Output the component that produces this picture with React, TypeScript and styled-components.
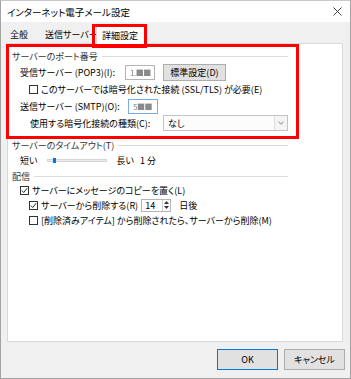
import React from 'react';
import styled, { createGlobalStyle } from 'styled-components';

const Global = createGlobalStyle`
  html, body { margin: 0; padding: 0; background: #fff; }
  body {
    font-family: "Noto Sans CJK JP", "Noto Sans", sans-serif;
    font-size: 9px;
    color: #000;
    font-feature-settings: "palt";
  }
  * { box-sizing: border-box; }
`;

const Window = styled.div`
  position: relative;
  width: 351px;
  height: 379px;
  background: #f0f0f0;
  border: 1px solid #a3a3a3;
  border-top-color: #c8c8c8;
  display: flex;
  flex-direction: column;
`;

const TitleBar = styled.div`
  height: 21px;
  background: #fff;
  display: flex;
  align-items: center;
  justify-content: space-between;
  padding: 0 8px 0 6px;
  font-size: 9.5px;
`;

const Close = styled.svg`
  width: 9px;
  height: 9px;
`;

const TabRow = styled.div`
  height: 21px;
  display: flex;
  align-items: flex-end;
  padding-left: 6px;
`;

const Tab = styled.div<{ $w: number; $pl: number; $active?: boolean }>`
  width: ${p => p.$w}px;
  height: ${p => (p.$active ? 19 : 17)}px;
  padding-left: ${p => p.$pl}px;
  display: flex;
  align-items: center;
  white-space: nowrap;
  overflow: hidden;
  position: relative;
  background: ${p => (p.$active ? '#fff' : '#f0f0f0')};
  margin-left: ${p => (p.$active ? -2 : 0)}px;
  margin-bottom: ${p => (p.$active ? -1 : 0)}px;
  z-index: ${p => (p.$active ? 2 : 1)};
  border: ${p => (p.$active ? '1px solid #d9d9d9' : 'none')};
  border-bottom: none;
`;

const Panel = styled.div`
  margin-left: 6px;
  width: 336px;
  height: 299px;
  background: #fff;
  border: 1px solid #d9d9d9;
  padding: 5px 54px 0 4px;
  display: flex;
  flex-direction: column;
`;

const GroupHead = styled.div<{ $mt?: number }>`
  height: 14px;
  margin-top: ${p => p.$mt ?? 0}px;
  display: flex;
  align-items: center;
  color: #333;
`;

const HeadLine = styled.div`
  flex: 1;
  height: 1px;
  background: #dcdcdc;
  margin-left: 4px;
`;

const Row = styled.div<{ $h: number; $indent: number; $mt?: number }>`
  height: ${p => p.$h}px;
  margin-top: ${p => p.$mt ?? 0}px;
  padding-left: ${p => p.$indent}px;
  display: flex;
  align-items: center;
  white-space: nowrap;
`;

const Label = styled.span<{ $w?: number }>`
  display: inline-block;
  ${p => (p.$w ? `width: ${p.$w}px;` : '')}
`;

const TextBox = styled.div<{ $focus?: boolean; $w: number; $h: number }>`
  width: ${p => p.$w}px;
  height: ${p => p.$h}px;
  border: 1px solid ${p => (p.$focus ? '#7aaee0' : '#b4b4b4')};
  background: #fff;
  display: flex;
  align-items: center;
  padding-left: 4px;
  overflow: hidden;
`;

const Blur = styled.span`
  color: #8a8a8a;
  filter: blur(0.7px);
  font-size: 8px;
  letter-spacing: -0.5px;
`;

const PushButton = styled.div<{ $w: number; $h: number; $default?: boolean }>`
  width: ${p => p.$w}px;
  height: ${p => p.$h}px;
  background: #e1e1e1;
  border: 1px solid ${p => (p.$default ? '#0078d7' : '#adadad')};
  display: flex;
  align-items: center;
  justify-content: center;
`;

const Gap = styled.span<{ $w: number }>`
  width: ${p => p.$w}px;
  flex: none;
`;

const Box = styled.div`
  width: 9px;
  height: 9px;
  border: 1px solid #333;
  background: #fff;
  margin-right: 3px;
  flex: none;
  display: flex;
  align-items: center;
  justify-content: center;
`;

const Select = styled.div`
  width: 125px;
  height: 16px;
  border: 1px solid #c4c4c4;
  background: #fcfcfc;
  display: flex;
  align-items: center;
  padding-left: 4px;
  justify-content: space-between;
`;

const ArrowBox = styled.div`
  width: 13px;
  height: 14px;
  border-left: 1px solid #e0e0e0;
  background: #f4f4f4;
  display: flex;
  align-items: center;
  justify-content: center;
`;

const Track = styled.div`
  position: relative;
  width: 60px;
  height: 3px;
  background: #e7eaea;
  border: 1px solid #d6d6d6;
  margin: 0 10px 0 9px;
`;

const Thumb = styled.div`
  position: absolute;
  left: 5px;
  top: -2px;
  width: 3px;
  height: 5px;
  background: #0078d7;
`;

const Spin = styled.div`
  width: 30px;
  height: 13px;
  border: 1px solid #b4b4b4;
  background: #fff;
  display: flex;
  align-items: center;
  justify-content: space-between;
  padding-left: 3px;
  margin: 0 8px 0 3px;
`;

const SpinArrows = styled.div`
  width: 8px;
  height: 11px;
  border-left: 1px solid #d0d0d0;
  display: flex;
  flex-direction: column;
  align-items: center;
  justify-content: space-around;
`;

const Footer = styled.div`
  flex: 1;
  display: flex;
  justify-content: flex-end;
  align-items: flex-start;
  gap: 6px;
  padding: 7px 5px 0 0;
`;

const Mark = styled.div<{ $l: number; $t: number; $w: number; $h: number }>`
  position: absolute;
  left: ${p => p.$l}px;
  top: ${p => p.$t}px;
  width: ${p => p.$w}px;
  height: ${p => p.$h}px;
  border: 3px solid #f00;
  z-index: 5;
  pointer-events: none;
`;

const Check = () => (
  <svg width="7" height="7" viewBox="0 0 7 7">
    <path d="M0.8 3.6 L2.7 5.5 L6.2 1.2" fill="none" stroke="#222" strokeWidth="1" />
  </svg>
);

const CheckBox = ({ on }: { on?: boolean }) => <Box>{on && <Check />}</Box>;

export default function App() {
  return (
    <>
      <Global />
      <Window>
        <TitleBar>
          <span>インターネット電子メール設定</span>
          <Close viewBox="0 0 9 9">
            <path d="M0.5 0.5 L8.5 8.5 M8.5 0.5 L0.5 8.5" stroke="#333" strokeWidth="0.9" />
          </Close>
        </TitleBar>
        <TabRow>
          <Tab $w={33} $pl={3}>全般</Tab>
          <Tab $w={58} $pl={5}>送信サーバー</Tab>
          <Tab $w={50} $pl={5} $active>詳細設定</Tab>
        </TabRow>
        <Panel>
          <GroupHead>
            サーバーのポート番号
            <HeadLine />
          </GroupHead>
          <Row $h={18} $indent={8}>
            <Label $w={105}>受信サーバー (POP3)(I):</Label>
            <TextBox $w={30} $h={15}><Blur>1.■■</Blur></TextBox>
            <Gap $w={8} />
            <PushButton $w={63} $h={17}>標準設定(D)</PushButton>
          </Row>
          <Row $h={17} $indent={17}>
            <CheckBox />
            このサーバーでは暗号化された接続 (SSL/TLS) が必要(E)
          </Row>
          <Row $h={17} $indent={8}>
            <Label $w={108}>送信サーバー (SMTP)(O):</Label>
            <TextBox $w={30} $h={15} $focus><Blur>5■■</Blur></TextBox>
          </Row>
          <Row $h={16} $indent={18}>
            <Label $w={133}>使用する暗号化接続の種類(C):</Label>
            <Select>
              なし
              <ArrowBox>
                <svg width="6" height="4" viewBox="0 0 6 4">
                  <path d="M0.5 0.8 L3 3.2 L5.5 0.8" fill="none" stroke="#777" strokeWidth="0.9" />
                </svg>
              </ArrowBox>
            </Select>
          </Row>
          <GroupHead $mt={7}>
            サーバーのタイムアウト(T)
            <HeadLine />
          </GroupHead>
          <Row $h={14} $indent={8} $mt={1}>
            短い
            <Track><Thumb /></Track>
            長い&nbsp;&nbsp;&nbsp;1 分
          </Row>
          <GroupHead $mt={2}>
            配信
            <HeadLine />
          </GroupHead>
          <Row $h={14} $indent={8}>
            <CheckBox on />
            サーバーにメッセージのコピーを置く(L)
          </Row>
          <Row $h={16} $indent={17}>
            <CheckBox on />
            サーバーから削除する(R)
            <Spin>
              14
              <SpinArrows>
                <svg width="5" height="3" viewBox="0 0 5 3"><path d="M0 3 L2.5 0 L5 3Z" fill="#333" /></svg>
                <svg width="5" height="3" viewBox="0 0 5 3"><path d="M0 0 L2.5 3 L5 0Z" fill="#333" /></svg>
              </SpinArrows>
            </Spin>
            日後
          </Row>
          <Row $h={15} $indent={17}>
            <CheckBox />
            [削除済みアイテム] から削除されたら、サーバーから削除(M)
          </Row>
        </Panel>
        <Footer>
          <PushButton $w={61} $h={21} $default>OK</PushButton>
          <PushButton $w={61} $h={21}>キャンセル</PushButton>
        </Footer>
        <Mark $l={91} $t={23} $w={55} $h={24} />
        <Mark $l={5} $t={43} $w={293} $h={95} />
      </Window>
    </>
  );
}
